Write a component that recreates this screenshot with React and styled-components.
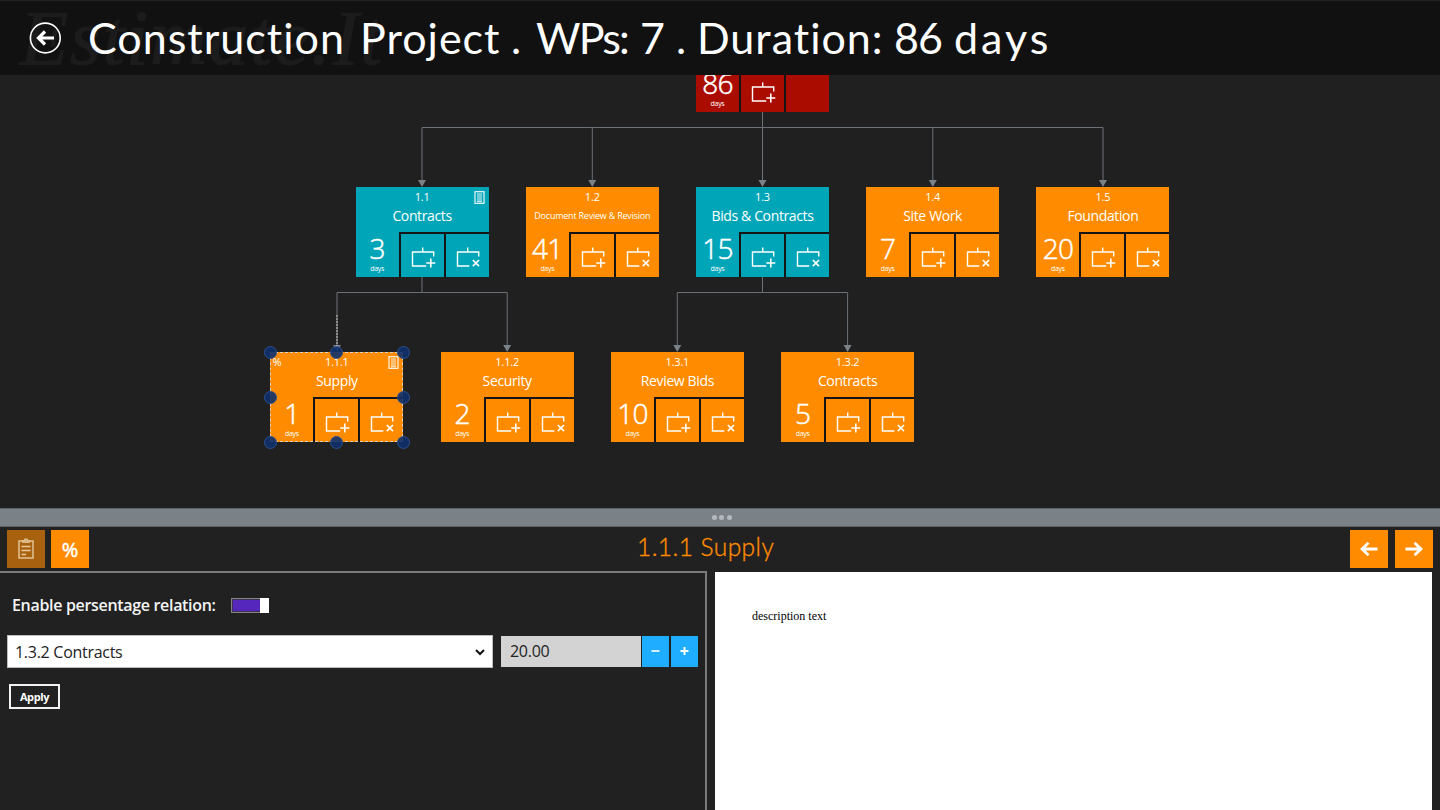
import * as React from 'react';
import styled, { createGlobalStyle } from 'styled-components';

const GlobalStyle = createGlobalStyle`
    * {
        box-sizing: border-box;
    }

    body {
        margin: 0;
        background: #212121;
        overflow: hidden;
        font-family: 'Open Sans', 'Noto Sans', sans-serif;
    }

    button {
        font-family: inherit;
        padding: 0;
        border: 0;
    }
`;

const Page = styled.div`
    width: 1440px;
    height: 810px;
    display: flex;
    flex-direction: column;
    background: #212121;
    overflow: hidden;
`;

const Header = styled.header`
    position: relative;
    flex: none;
    height: 75px;
    display: flex;
    align-items: center;
    padding-left: 29px;
    background: #111;
    border-top: 1px solid #222;
    overflow: hidden;
`;

const Watermark = styled.span`
    position: absolute;
    left: 20px;
    top: -7px;
    font: italic 400 79px/88px 'Liberation Serif', serif;
    letter-spacing: 1.8px;
    color: #1c1c1c;
    -webkit-text-stroke: 1.2px #1c1c1c;
    white-space: nowrap;
`;

const BackButton = styled.button`
    position: relative;
    width: 33px;
    height: 33px;
    background: none;

    svg {
        display: block;
    }
`;

const Heading = styled.h1`
    position: relative;
    display: flex;
    margin: 0 0 0 26px;
    font: 400 43px/56px Lato, sans-serif;
    color: #fff;
    white-space: nowrap;
`;

const Word = styled.span`
    width: ${(p) => p.$width}px;
    letter-spacing: ${(p) => p.$spacing}px;
`;

const Canvas = styled.main`
    position: relative;
    flex: none;
    height: 433px;
    background: #202020;
    overflow: hidden;
`;

const Edges = styled.svg`
    position: absolute;
    left: 0;
    top: 0;
`;

const NodeBox = styled.article`
    position: absolute;
    left: ${(p) => p.$x}px;
    top: ${(p) => p.$y}px;
    width: 133px;
    height: 90px;
    display: grid;
    grid-template-columns: 43px 43px 43px;
    grid-template-rows: 45px 43px;
    gap: 2px;
    color: #fff;
    background: linear-gradient(${(p) => p.$color}, ${(p) => p.$color}) 0 0 / 43px 100% no-repeat #151515;
`;

const NodeHead = styled.div`
    position: relative;
    grid-column: 1 / -1;
    background: ${(p) => p.$color};
    text-align: center;
    white-space: nowrap;
`;

const NodeCode = styled.div`
    height: 19px;
    font-size: 11px;
    line-height: 20px;
    letter-spacing: -0.2px;
`;

const NodeName = styled.div`
    font-size: ${(p) => (p.$small ? 9 : 14)}px;
    line-height: 19px;
    letter-spacing: ${(p) => (p.$small ? -0.22 : -0.37)}px;
`;

const PercentMark = styled.span`
    position: absolute;
    left: 2px;
    top: 2px;
    font-size: 11px;
    line-height: 16px;
`;

const NoteMark = styled.svg`
    position: absolute;
    right: 4px;
    top: 4px;
`;

const Days = styled.div`
    display: flex;
    flex-direction: column;
    align-items: center;
    background: ${(p) => p.$color};
`;

const DaysValue = styled.span`
    font-size: 28px;
    font-weight: 300;
    line-height: 29px;
    letter-spacing: -0.8px;
    -webkit-text-stroke: 0.5px #fff;
`;

const DaysUnit = styled.span`
    font-size: 7px;
    line-height: 11px;
    letter-spacing: -0.3px;
`;

const NodeAction = styled.button`
    background: ${(p) => p.$color};

    svg {
        display: block;
    }
`;

const Selection = styled.div`
    position: absolute;
    left: ${(p) => p.$x}px;
    top: ${(p) => p.$y}px;
    width: 133px;
    height: 90px;
    outline: 1px dashed #d8cfc2;
    outline-offset: -1px;
`;

const Handle = styled.span`
    position: absolute;
    left: ${(p) => p.$left}%;
    top: ${(p) => p.$top}%;
    width: 13px;
    height: 13px;
    margin: -6.5px 0 0 -6.5px;
    border: 1px solid #2c4f8c;
    border-radius: 50%;
    background: rgba(15, 48, 108, 0.9);
`;

const Splitter = styled.div`
    flex: none;
    height: 19px;
    display: flex;
    align-items: center;
    justify-content: center;
    gap: 2.5px;
    padding-left: 3px;
    background: #7a8187;
    border-top: 1px solid #5d6266;
    border-bottom: 1px solid #5d6266;
`;

const Dot = styled.span`
    width: 5px;
    height: 5px;
    border-radius: 50%;
    background: #b5b9bd;
`;

const Toolbar = styled.div`
    flex: none;
    height: 44px;
    display: flex;
    align-items: center;
    padding: 0 7px;
`;

const Tools = styled.div`
    display: flex;
    gap: 6px;
    width: 630px;
`;

const Nav = styled.div`
    display: flex;
    gap: 7px;
    margin-left: auto;
`;

const Tile = styled.button`
    width: 38px;
    height: 38px;
    display: flex;
    align-items: center;
    justify-content: center;
    background: ${(p) => (p.$dim ? '#a8620f' : '#ff8c00')};
    color: #fff;
    font-size: 20px;
    -webkit-text-stroke: 0.5px #fff;
`;

const SectionTitle = styled.h2`
    margin: 0;
    padding-bottom: 4px;
    font: 300 24.5px/30px Lato, sans-serif;
    letter-spacing: 0.45px;
    color: #ff8c00;
    -webkit-text-stroke: 0.35px #ff8c00;
    white-space: nowrap;
`;

const Body = styled.div`
    flex: 1;
    display: flex;
    gap: 8px;
    padding-right: 8px;
`;

const Settings = styled.section`
    width: 707px;
    padding: 21px 0 0 7px;
    border: solid #7b7b7b;
    border-width: 2px 2px 0 0;
`;

const SwitchRow = styled.div`
    display: flex;
    align-items: center;
    height: 22px;
    padding-left: 5px;
`;

const SwitchLabel = styled.span`
    width: 219px;
    font-size: 16px;
    font-weight: 600;
    letter-spacing: -0.32px;
    color: #f4f4f4;
    white-space: nowrap;
`;

const Switch = styled.span`
    display: flex;
    justify-content: flex-end;
    width: 38px;
    height: 15px;
    border: 1px solid #858585;
    background: #5627bd;
    box-shadow: inset 0 0 0 1px #3c3050;
`;

const Thumb = styled.span`
    width: 9px;
    height: 15px;
    margin: -1px -1px 0 0;
    background: #fff;
`;

const FieldRow = styled.div`
    display: flex;
    align-items: center;
    height: 33px;
    margin-top: 19px;
    font-size: 16px;
    letter-spacing: -0.28px;
    color: #222;
`;

const Picker = styled.div`
    display: flex;
    align-items: center;
    justify-content: space-between;
    width: 486px;
    height: 33px;
    padding: 1px 7px 0 7px;
    background: #fff;
    border: 1px solid #bdbdbd;
`;

const Amount = styled.div`
    width: 140px;
    height: 31px;
    margin: 0 1px 0 8px;
    padding-left: 9px;
    line-height: 30px;
    background: #d3d3d3;
`;

const Step = styled.button`
    width: 27px;
    height: 31px;
    margin-right: 2px;
    background: #1fadff;

    svg {
        display: block;
    }
`;

const ApplyButton = styled.button`
    display: block;
    width: 51px;
    height: 25px;
    margin: 16px 0 0 2px;
    border: 2px solid #f2f2f2;
    background: transparent;
    color: #fff;
    font-size: 11px;
    font-weight: 700;
    letter-spacing: -0.4px;
`;

const Description = styled.section`
    flex: 1;
    margin-top: 1px;
    padding: 37px;
    background: #fff;
    color: #000;
    font: 12px/14px 'Liberation Serif', serif;
`;

const ORANGE = '#ff8c00';
const TEAL = '#00a5b8';
const RED = '#ab0c00';

// coordinates are relative to the scrolled canvas
const nodes = [
    { code: '1', days: 86, color: RED, x: 696, y: -52.6, root: true },
    { code: '1.1', name: 'Contracts', days: 3, color: TEAL, x: 355.6, y: 112.4, note: true },
    { code: '1.2', name: 'Document Review & Revision', days: 41, color: ORANGE, x: 525.8, y: 112.4, small: true },
    { code: '1.3', name: 'Bids & Contracts', days: 15, color: TEAL, x: 696, y: 112.4 },
    { code: '1.4', name: 'Site Work', days: 7, color: ORANGE, x: 866.2, y: 112.4 },
    { code: '1.5', name: 'Foundation', days: 20, color: ORANGE, x: 1036.4, y: 112.4 },
    { code: '1.1.1', name: 'Supply', days: 1, color: ORANGE, x: 270.4, y: 277.4, note: true, percent: true, selected: true },
    { code: '1.1.2', name: 'Security', days: 2, color: ORANGE, x: 440.7, y: 277.4 },
    { code: '1.3.1', name: 'Review Bids', days: 10, color: ORANGE, x: 610.9, y: 277.4 },
    { code: '1.3.2', name: 'Contracts', days: 5, color: ORANGE, x: 781.1, y: 277.4 },
];

const links = [
    { from: 762.5, top: 37, bend: 52.5, tip: 112, to: [422, 592.3, 762.5, 932.8, 1103] },
    { from: 422, top: 202, bend: 217.5, tip: 277, to: [337, 507.2] },
    { from: 762.5, top: 202, bend: 217.5, tip: 277, to: [677.3, 847.6] },
];

const handles = [[0, 0], [50, 0], [100, 0], [0, 50], [100, 50], [0, 100], [50, 100], [100, 100]];

const title = [
    { text: 'Construction', width: 272, spacing: 1 },
    { text: 'Project', width: 151, spacing: 1 },
    { text: '.', width: 25, spacing: 0 },
    { text: 'WPs:', width: 104, spacing: -1.8 },
    { text: '7', width: 36, spacing: 0 },
    { text: '.', width: 21, spacing: 0 },
    { text: 'Duration:', width: 197, spacing: 1 },
    { text: '86', width: 60, spacing: -1 },
    { text: 'days', width: 100, spacing: 3 },
];

function ActionIcon({ remove }) {
    return (
        <svg width="43" height="43" fill="none" stroke="#fff" strokeWidth="1.4">
            <path d={`M32.7 22.5V18H11.5V32H${remove ? 23.3 : 25.2}M21.7 18V13.5`} />
            {remove
                ? <path d="M26.8 26L33 32.2M33 26L26.8 32.2" strokeWidth="1.7" />
                : <path d="M29.8 24.5V33.5M25.3 29H34.3" strokeWidth="1.6" />}
        </svg>
    );
}

function NoteIcon() {
    return (
        <NoteMark width="11" height="13" fill="none" stroke="#fff">
            <rect x="1" y="0.7" width="9" height="11.6" strokeWidth="1.1" />
            <path d="M3 3H8M3 5H8M3 7H8M3 9H8M3 10.7H8" strokeWidth="0.9" />
        </NoteMark>
    );
}

function ArrowIcon({ right }) {
    return (
        <svg width="18" height="14" fill="none" stroke="#fff" strokeWidth="2.8">
            {right
                ? <path d="M0.5 7H16M9.5 0.8L16 7L9.5 13.2" />
                : <path d="M17.5 7H2M8.5 0.8L2 7L8.5 13.2" />}
        </svg>
    );
}

function ClipboardIcon() {
    return (
        <svg width="18" height="22" fill="none" stroke="#e6c99f" strokeWidth="1.4">
            <rect x="2" y="3" width="14" height="17" />
            <path d="M5.5 4.5V2.5H7.5V1H10.5V2.5H12.5V4.5Z" fill="#d9b37d" strokeWidth="0.8" />
            <path d="M4.5 8.5H13.5M4.5 12.5H13.5M4.5 16.5H9" />
        </svg>
    );
}

function WorkPackage({ node }) {
    const { color } = node;
    return (
        <NodeBox $x={node.x} $y={node.y} $color={color}>
            <NodeHead $color={color}>
                {!node.root && <NodeCode>{node.code}</NodeCode>}
                {!node.root && <NodeName $small={node.small}>{node.name}</NodeName>}
                {node.percent && <PercentMark>%</PercentMark>}
                {node.note && <NoteIcon />}
            </NodeHead>
            <Days $color={color}>
                <DaysValue>{node.days}</DaysValue>
                <DaysUnit>days</DaysUnit>
            </Days>
            <NodeAction $color={color}><ActionIcon /></NodeAction>
            <NodeAction $color={color}>{!node.root && <ActionIcon remove />}</NodeAction>
        </NodeBox>
    );
}

function Links() {
    return (
        <Edges width="1440" height="433" fill="none" stroke="#6c7177">
            {links.map((link) => (
                <g key={`${link.from}-${link.top}`}>
                    <path d={`M${link.from} ${link.top}V${link.bend}`} />
                    {link.to.map((x) => (
                        <React.Fragment key={x}>
                            <path d={`M${link.from} ${link.bend}H${x}V${link.tip - 6}`} />
                            <path d={`M${x - 4} ${link.tip - 7}h8l-4 7z`} fill="#7a8187" stroke="none" />
                        </React.Fragment>
                    ))}
                </g>
            ))}
            <path d="M337 240V272" stroke="#d0d0d0" strokeDasharray="2 1" />
        </Edges>
    );
}

export default function App() {
    const selected = nodes.find((n) => n.selected);

    return (
        <Page>
            <GlobalStyle />
            <Header>
                <Watermark>Estimate.It</Watermark>
                <BackButton>
                    <svg width="33" height="33" fill="none" stroke="#fff">
                        <circle cx="16.3" cy="16" r="14.9" strokeWidth="1.6" />
                        <path d="M25 16H10M16 9.5L9.5 16L16 22.5" strokeWidth="3.2" />
                    </svg>
                </BackButton>
                <Heading>
                    {title.map((word, i) => (
                        <Word key={i} $width={word.width} $spacing={word.spacing}>{word.text}</Word>
                    ))}
                </Heading>
            </Header>
            <Canvas>
                <Links />
                {nodes.map((node) => <WorkPackage key={node.code} node={node} />)}
                <Selection $x={selected.x} $y={selected.y}>
                    {handles.map(([left, top]) => <Handle key={`${left}-${top}`} $left={left} $top={top} />)}
                </Selection>
            </Canvas>
            <Splitter>
                <Dot />
                <Dot />
                <Dot />
            </Splitter>
            <Toolbar>
                <Tools>
                    <Tile $dim><ClipboardIcon /></Tile>
                    <Tile>%</Tile>
                </Tools>
                <SectionTitle>{selected.code} {selected.name}</SectionTitle>
                <Nav>
                    <Tile><ArrowIcon /></Tile>
                    <Tile><ArrowIcon right /></Tile>
                </Nav>
            </Toolbar>
            <Body>
                <Settings>
                    <SwitchRow>
                        <SwitchLabel>Enable persentage relation:</SwitchLabel>
                        <Switch><Thumb /></Switch>
                    </SwitchRow>
                    <FieldRow>
                        <Picker>
                            1.3.2 Contracts
                            <svg width="10" height="8" fill="none" stroke="#111" strokeWidth="2">
                                <path d="M1 2L5 6L9 2" />
                            </svg>
                        </Picker>
                        <Amount>20.00</Amount>
                        <Step>
                            <svg width="27" height="31" stroke="#fff" strokeWidth="1.6"><path d="M9.5 15H17.5" /></svg>
                        </Step>
                        <Step>
                            <svg width="27" height="31" stroke="#fff" strokeWidth="2"><path d="M9.5 15H17.5M13.5 11V19" /></svg>
                        </Step>
                    </FieldRow>
                    <ApplyButton>Apply</ApplyButton>
                </Settings>
                <Description>description text</Description>
            </Body>
        </Page>
    );
}
